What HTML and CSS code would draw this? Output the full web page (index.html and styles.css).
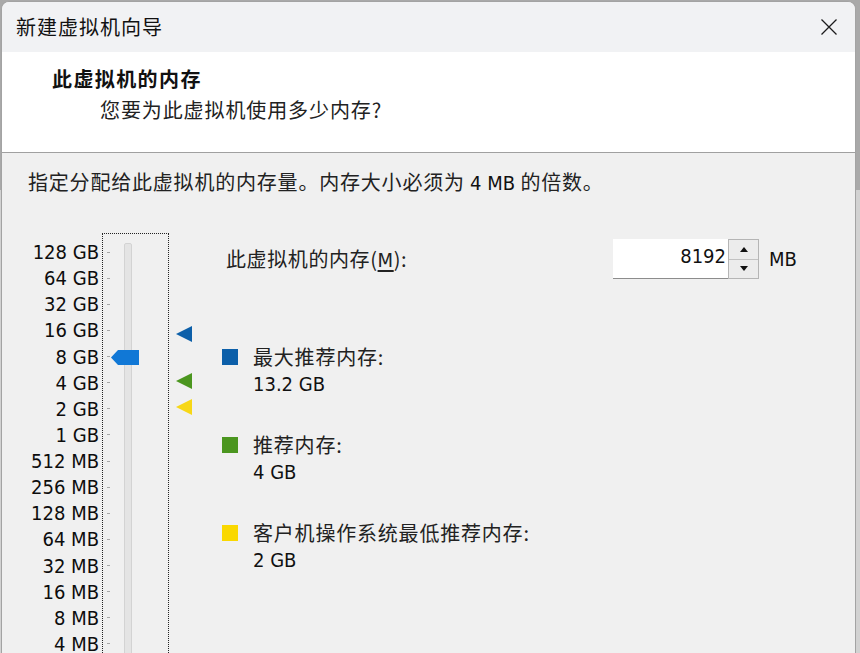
FILE: index.html
```html
<!DOCTYPE html>
<html lang="zh-CN">
<head>
<meta charset="utf-8">
<title>新建虚拟机向导</title>
<link rel="stylesheet" href="styles.css">
</head>
<body>
<div class="window">
  <div class="titlebar">
    <span class="title">新建虚拟机向导</span>
    <svg class="close" width="18" height="18" viewBox="0 0 18 18"><path d="M1.5 1.5 L16.5 16.5 M16.5 1.5 L1.5 16.5" stroke="#1c1c1c" stroke-width="1.3" fill="none"/></svg>
  </div>
  <div class="header">
    <div class="h-title">此虚拟机的内存</div>
    <div class="h-sub">您要为此虚拟机使用多少内存?</div>
  </div>
  <div class="content">
    <p class="desc">指定分配给此虚拟机的内存量。内存大小必须为 <span class="lat">4 MB</span> 的倍数。</p>
    <div class="main">
      <div class="scale">
        <ul class="labels">
          <li>128 GB</li><li>64 GB</li><li>32 GB</li><li>16 GB</li>
          <li>8 GB</li><li>4 GB</li><li>2 GB</li><li>1 GB</li>
          <li>512 MB</li><li>256 MB</li><li>128 MB</li><li>64 MB</li>
          <li>32 MB</li><li>16 MB</li><li>8 MB</li><li>4 MB</li>
        </ul>
        <div class="slider">
          <div class="ticks">
            <i></i><i></i><i></i><i></i><i></i><i></i><i></i><i></i>
            <i></i><i></i><i></i><i></i><i></i><i></i><i></i><i></i>
          </div>
          <div class="groove"></div>
          <svg class="thumb" width="28" height="15" viewBox="0 0 28 15"><polygon points="0,7.5 7,0 28,0 28,15 7,15" fill="#1178d6"/></svg>
        </div>
        <div class="marks">
          <svg class="mark mark-max" width="16" height="16" viewBox="0 0 16 16"><polygon points="16,0 0,8 16,16" fill="#0c5fa9"/></svg>
          <svg class="mark mark-rec" width="16" height="16" viewBox="0 0 16 16"><polygon points="16,0 0,8 16,16" fill="#4b961f"/></svg>
          <svg class="mark mark-min" width="16" height="16" viewBox="0 0 16 16"><polygon points="16,0 0,8 16,16" fill="#f7d716"/></svg>
        </div>
      </div>
      <div class="panel">
        <div class="mem-row">
          <label class="mem-label">此虚拟机的内存(<u>M</u>):</label>
          <div class="spin">
            <div class="field">8192</div>
            <div class="btns">
              <div class="btn"><span class="arr-up"></span></div>
              <div class="btn"><span class="arr-down"></span></div>
            </div>
          </div>
          <span class="unit">MB</span>
        </div>
        <ul class="legend">
          <li><span class="sq sq-max"></span><span class="lg-name">最大推荐内存:</span><span class="lg-val">13.2 GB</span></li>
          <li><span class="sq sq-rec"></span><span class="lg-name">推荐内存:</span><span class="lg-val">4 GB</span></li>
          <li><span class="sq sq-min"></span><span class="lg-name">客户机操作系统最低推荐内存:</span><span class="lg-val">2 GB</span></li>
        </ul>
      </div>
    </div>
  </div>
</div>
</body>
</html>
```
FILE: styles.css
```css
* { box-sizing: border-box; }
html, body { margin: 0; padding: 0; }
body {
  width: 860px;
  height: 653px;
  overflow: hidden;
  background: linear-gradient(to bottom, #a9a9a9 0, #a9a9a9 190px, #d2d2d2 190px);
  padding: 1px 4px 0 1px;
  font-family: "Noto Sans CJK SC", sans-serif;
  color: #1a1a1a;
}
.window {
  width: 855px;
  height: 660px;
  border: 1px solid #a3a3a3;
  border-bottom: none;
  border-radius: 8px 8px 0 0;
  overflow: hidden;
  background: #f0f0f0;
}
.titlebar {
  height: 50px;
  background: #f1f2f4;
  display: flex;
  align-items: center;
  justify-content: space-between;
  padding: 0 17px 0 14px;
}
.title {
  font-size: 20px;
  letter-spacing: 1px;
  color: #111;
  line-height: 24px;
}
.close { display: block; }
.header {
  height: 101px;
  background: #fff;
  border-bottom: 1px solid #a0a0a0;
  padding: 15px 0 0 50px;
}
.h-title {
  font-size: 20px;
  font-weight: 700;
  line-height: 24px;
  letter-spacing: 1.4px;
  color: #111;
}
.h-sub {
  font-size: 20px;
  line-height: 26px;
  margin: 6px 0 0 48px;
  letter-spacing: 0.9px;
  color: #222;
}
.desc {
  margin: 0;
  padding: 17px 0 0 26px;
  font-size: 20px;
  line-height: 24px;
  letter-spacing: 0.8px;
  color: #222;
}
.lat {
  font-family: "DejaVu Sans Condensed", "DejaVu Sans", sans-serif;
  font-stretch: condensed;
  font-size: 20px;
  letter-spacing: 0;
  color: #111;
}
.main {
  display: flex;
  margin-top: 38px;
}
.scale {
  display: flex;
  align-items: flex-start;
}
.labels {
  list-style: none;
  margin: 0;
  padding: 6px 0 0 0;
  width: 97px;
  text-align: right;
  font-family: "DejaVu Sans Condensed", "DejaVu Sans", sans-serif;
  font-stretch: condensed;
  font-size: 20px;
  color: #0d0d0d;
}
.labels li {
  height: 26.13px;
  line-height: 26px;
  white-space: nowrap;
}
.slider {
  position: relative;
  margin-left: 3px;
  width: 67px;
  height: 440px;
  border: 1px dotted #222;
  display: flex;
}
.ticks {
  width: 14px;
  padding: 5px 0 0 4px;
  display: flex;
  flex-direction: column;
}
.ticks i {
  display: flex;
  align-items: center;
  height: 26.13px;
}
.ticks i::before {
  content: "";
  width: 3px;
  height: 1px;
  background: #a8a8a8;
}
.groove {
  margin: 9px 0 0 7px;
  width: 8px;
  height: 430px;
  background: #e4e4e4;
  border: 1px solid #d3d3d3;
  border-radius: 2px 2px 0 0;
}
.thumb {
  position: absolute;
  left: 8px;
  top: 116px;
}
.marks {
  position: relative;
  width: 31px;
  height: 200px;
}
.mark { position: absolute; left: 7px; }
.mark-max { top: 93px; }
.mark-rec { top: 140px; }
.mark-min { top: 166px; }
.panel {
  margin-left: 22px;
}
.mem-row {
  display: flex;
  align-items: center;
  height: 40px;
  margin-top: 6px;
}
.mem-label {
  width: 391px;
  padding-left: 4px;
  font-size: 20px;
  line-height: 24px;
  letter-spacing: 0.6px;
  color: #222;
}
.mem-label u {
  font-family: "DejaVu Sans Condensed", "DejaVu Sans", sans-serif;
  font-stretch: condensed;
  font-size: 20px;
  text-underline-offset: 3px;
}
.spin {
  display: flex;
  height: 40px;
}
.field {
  width: 115px;
  height: 40px;
  background: #fff;
  border-bottom: 1px solid #8c8c8c;
  text-align: right;
  padding-right: 2px;
  font-family: "DejaVu Sans Condensed", "DejaVu Sans", sans-serif;
  font-stretch: condensed;
  font-size: 20px;
  line-height: 34px;
  color: #111;
}
.btns {
  width: 31px;
  display: flex;
  flex-direction: column;
  border: 1px solid #b5b5b5;
  background: #ececec;
}
.btn {
  flex: 1;
  display: flex;
  align-items: center;
  justify-content: center;
  background: #ececec;
}
.btn + .btn { border-top: 1px solid #c2c2c2; }
.arr-up, .arr-down {
  width: 0;
  height: 0;
  border-left: 4px solid transparent;
  border-right: 4px solid transparent;
}
.arr-up { border-bottom: 5px solid #111; }
.arr-down { border-top: 5px solid #111; }
.unit {
  margin-left: 10px;
  font-family: "DejaVu Sans Condensed", "DejaVu Sans", sans-serif;
  font-stretch: condensed;
  font-size: 20px;
  color: #111;
}
.legend {
  list-style: none;
  margin: 64px 0 0 0;
  padding: 0;
  display: flex;
  flex-direction: column;
  gap: 33px;
}
.legend li {
  display: grid;
  grid-template-columns: 31px auto;
  grid-template-rows: 27.5px 27.5px;
  align-items: center;
}
.sq {
  width: 16px;
  height: 16px;
  grid-row: 1;
  grid-column: 1;
}
.sq-max { background: #0c5fa9; }
.sq-rec { background: #4b961f; }
.sq-min { background: #fad800; }
.lg-name {
  grid-row: 1;
  grid-column: 2;
  font-size: 20px;
  line-height: 24px;
  letter-spacing: 0.8px;
  color: #222;
}
.lg-val {
  grid-row: 2;
  grid-column: 2;
  font-family: "DejaVu Sans Condensed", "DejaVu Sans", sans-serif;
  font-stretch: condensed;
  font-size: 20px;
  color: #111;
}
```
